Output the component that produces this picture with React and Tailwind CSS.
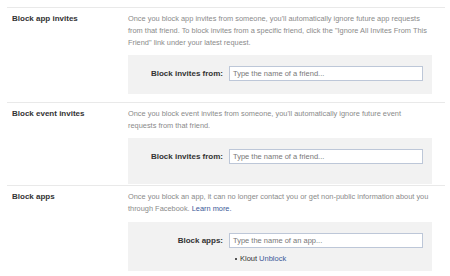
import React from "react";

const font = { fontFamily: '"Liberation Sans", Arial, sans-serif' };

function Row({ title, children, box, boxClass, textWidth = "w-[302px]" }) {
  return (
    <div className="flex border-t border-[#e9e9e9]">
      <div className="w-[121px] pl-[5px] pt-[5px] text-[8px] leading-[12px] font-bold text-[#333]">
        {title}
      </div>
      <div className="w-[304px] pt-[5px]">
        <div className={`${textWidth} text-[7.4px] leading-[12px] text-[#8a8a8a]`}>
          {children}
        </div>
        <div className={`bg-[#f2f2f2] ${boxClass}`}>{box}</div>
      </div>
    </div>
  );
}

function Field({ label, placeholder }) {
  return (
    <div className="flex items-center">
      <div className="w-[95px] text-right text-[8px] font-bold text-[#333]">
        {label}
      </div>
      <div className="ml-[6px] w-[194px] h-[15px] border border-[#bdc7d8] bg-white flex items-center pl-[3px] text-[7.5px] text-[#777]">
        {placeholder}
      </div>
    </div>
  );
}

export default function App() {
  return (
    <div className="w-[450px] h-[276px] bg-white overflow-hidden" style={font}>
      <div className="ml-[7px] mt-[7px] w-[438px]">
        <Row
          title="Block app invites"
          boxClass="mt-[6px] mb-[8px] h-[39px] pt-[11px]"
          box={<Field label="Block invites from:" placeholder="Type the name of a friend..." />}>
          Once you block app invites from someone, you'll automatically ignore
          future app requests from that friend. To block invites from a specific
          friend, click the "Ignore All Invites From This Friend" link under
          your latest request.
        </Row>
        <Row
          title="Block event invites"
          boxClass="mt-[6px] mb-[1px] h-[46px] pt-[11px]"
          box={<Field label="Block invites from:" placeholder="Type the name of a friend..." />}>
          Once you block event invites from someone, you'll automatically ignore
          future event requests from that friend.
        </Row>
        <Row
          title="Block apps"
          textWidth="w-[318px]"
          boxClass="mt-[7px] h-[49px] pt-[11px]"
          box={
            <div>
              <Field label="Block apps:" placeholder="Type the name of an app..." />
              <div className="ml-[107px] mt-[5px] flex items-center text-[7.5px] leading-[12px]">
                <span className="w-[2px] h-[2px] bg-[#555] mr-[3px]" />
                <span className="text-[#333]">Klout</span>
                <span className="ml-[2px] text-[#3b5998]">Unblock</span>
              </div>
            </div>
          }>
          <p>
            Once you block an app, it can no longer contact you or get
            non-public information about you
          </p>
          <p>
            through Facebook. <span className="text-[#3b5998]">Learn more.</span>
          </p>
        </Row>
      </div>
    </div>
  );
}
